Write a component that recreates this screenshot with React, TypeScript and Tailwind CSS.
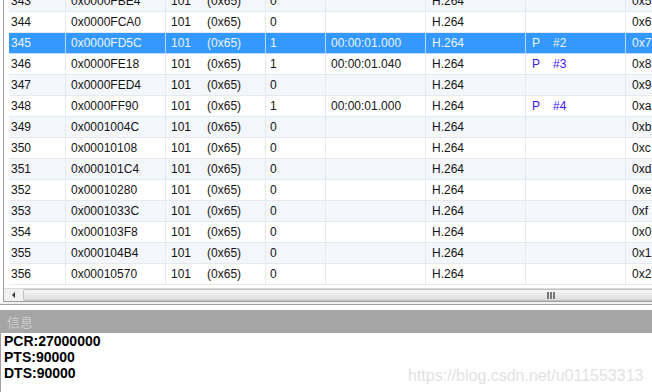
import React from "react"

type Row = {
    no: number
    addr: string
    flag: string
    time?: string
    frame?: string
    tail: string
}

const rows: Row[] = [
    { no: 343, addr: "0x0000FBE4", flag: "0", tail: "0x5" },
    { no: 344, addr: "0x0000FCA0", flag: "0", tail: "0x6" },
    { no: 345, addr: "0x0000FD5C", flag: "1", time: "00:00:01.000", frame: "#2", tail: "0x7" },
    { no: 346, addr: "0x0000FE18", flag: "1", time: "00:00:01.040", frame: "#3", tail: "0x8" },
    { no: 347, addr: "0x0000FED4", flag: "0", tail: "0x9" },
    { no: 348, addr: "0x0000FF90", flag: "1", time: "00:00:01.000", frame: "#4", tail: "0xa" },
    { no: 349, addr: "0x0001004C", flag: "0", tail: "0xb" },
    { no: 350, addr: "0x00010108", flag: "0", tail: "0xc" },
    { no: 351, addr: "0x000101C4", flag: "0", tail: "0xd" },
    { no: 352, addr: "0x00010280", flag: "0", tail: "0xe" },
    { no: 353, addr: "0x0001033C", flag: "0", tail: "0xf" },
    { no: 354, addr: "0x000103F8", flag: "0", tail: "0x0" },
    { no: 355, addr: "0x000104B4", flag: "0", tail: "0x1" },
    { no: 356, addr: "0x00010570", flag: "0", tail: "0x2" },
]

const SELECTED = 345

function PacketRow({ row }: { row: Row }) {
    const sel = row.no === SELECTED
    const odd = row.no % 2 === 1
    const bg = sel ? "bg-[#3399ff] text-[#eef5ff]" : odd ? "bg-[#f3f6fa] text-[#141414]" : "bg-white text-[#141414]"
    const line = sel ? "border-[#bcdcff]" : "border-[#e6eaef]"
    const cell = `h-full flex items-center border-r ${line} whitespace-nowrap overflow-hidden`
    const frameColor = sel ? "text-[#eef5ff]" : "text-[#3d16f0]"

    return (
        <div className={`flex h-[21px] border-b ${line} ${bg}`}>
            <div className={`${cell} w-[57px] pl-[2px]`}>{row.no}</div>
            <div className={`${cell} w-[100px] pl-[5px]`}>{row.addr}</div>
            <div className={`${cell} w-[100px] pl-[5px]`}>
                <span>101</span>
                <span className="ml-[16px]">(0x65)</span>
            </div>
            <div className={`${cell} w-[60px] pl-[4px]`}>{row.flag}</div>
            <div className={`${cell} w-[100px] pl-[5px]`}>{row.time}</div>
            <div className={`${cell} w-[100px] pl-[6px]`}>H.264</div>
            <div className={`${cell} w-[100px] pl-[6px] ${frameColor}`}>
                {row.frame && (
                    <>
                        <span>P</span>
                        <span className="ml-[13px]">{row.frame}</span>
                    </>
                )}
            </div>
            <div className="h-full flex items-center flex-1 pl-[6px] whitespace-nowrap overflow-hidden">{row.tail}</div>
        </div>
    )
}

export default function App() {
    return (
        <div className="w-[652px] h-[392px] overflow-hidden bg-white relative font-['Liberation_Sans',sans-serif] text-[12px]">
            {/* packet list */}
            <div className="ml-[3px] h-[302px] border-l border-b border-[#a0a0a0] flex flex-col">
                <div className="h-[288px] overflow-hidden pl-[5px]">
                    <div className="-mt-[9px]">
                        {rows.map((r) => (
                            <PacketRow key={r.no} row={r} />
                        ))}
                    </div>
                </div>

                {/* horizontal scrollbar */}
                <div className="h-[13px] flex border-t border-[#dadada] bg-[#f0f0f0]">
                    <div className="w-[19px] flex items-center justify-center">
                        <div className="w-0 h-0 border-y-[3px] border-y-transparent border-r-[3px] border-r-[#333]" />
                    </div>
                    <div className="flex-1 -mr-[4px] rounded-l-[2px] border border-[#c2c2c2] bg-gradient-to-b from-[#f7f7f7] to-[#dcdcdc] flex items-center justify-end pr-[100px]">
                        <div className="flex gap-[1px]">
                            <div className="w-[2px] h-[7px] bg-[#777]" />
                            <div className="w-[2px] h-[7px] bg-[#777]" />
                            <div className="w-[2px] h-[7px] bg-[#777]" />
                        </div>
                    </div>
                </div>
            </div>

            <div className="h-[2px] bg-[#f0f0f0]" />
            <div className="h-[1px] bg-[#a0a0a0]" />
            <div className="h-[5px] bg-white" />

            {/* info panel */}
            <div className="h-[23px] bg-[#a5a5a5] flex items-center pl-[7px] text-[13px] text-[#cdcdcd] font-['Noto_Sans_CJK_SC',sans-serif]">
                信息
            </div>
            <div className="border-l border-[#a0a0a0] h-[59px] pl-[3px] font-['Liberation_Sans',sans-serif] font-bold text-[14px] leading-[16px] text-black">
                <div>PCR:27000000</div>
                <div>PTS:90000</div>
                <div>DTS:90000</div>
            </div>

            {/* watermark */}
            <div className="absolute left-[408px] top-[364px] text-[16px] text-[#e2e2e2] font-['Liberation_Sans',sans-serif] whitespace-nowrap">
                https://blog.csdn.net/u011553313
            </div>
        </div>
    )
}
